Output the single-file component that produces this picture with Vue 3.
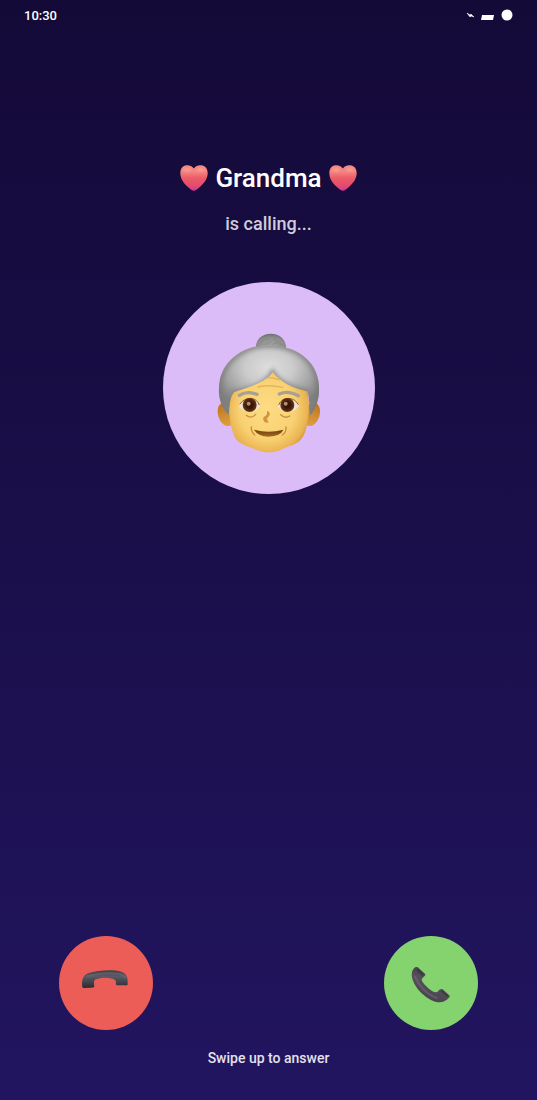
<script setup>
const time = '10:30'
const caller = 'Grandma'
</script>

<template>
  <main class="screen">
    <header class="status">
      <time>{{ time }}</time>
      <svg class="indicators" viewBox="0 0 48 16" aria-hidden="true">
        <path d="M2 5 L5 7 L6 6 L9 9 L6 8 L5 9 Z" fill="#fff" stroke="#fff" stroke-width=".5" />
        <path d="M17 7 H29 L28 12 H16 Z" fill="#fff" />
        <circle cx="42" cy="7" r="5.5" fill="#fff" />
      </svg>
    </header>

    <section class="caller">
      <h1>
        <svg v-for="side in ['left', 'right']" :key="side" :class="['heart', side]" viewBox="0 0 87 83" aria-hidden="true">
          <defs>
            <linearGradient :id="'heart-' + side" x1="0" y1="0" x2="0" y2="1">
              <stop offset="0" stop-color="#f28a80" />
              <stop offset=".25" stop-color="#f58480" />
              <stop offset=".5" stop-color="#ec5c68" />
              <stop offset=".78" stop-color="#e54c6c" />
              <stop offset="1" stop-color="#d2359a" />
            </linearGradient>
            <radialGradient :id="'shine-' + side">
              <stop offset="0" stop-color="#ffc2b1" stop-opacity=".45" />
              <stop offset="1" stop-color="#ff9b8e" stop-opacity="0" />
            </radialGradient>
          </defs>
          <path :fill="`url(#heart-${side})`" d="M43 12 C37 4 28 1 20 2 C8 3 1 13 1 27 C1 50 20 67 36 79 Q43 84 50 79 C67 67 86 49 86 27 C86 12 78 3 66 2 C57 1 49 4 43 12 Z" />
          <ellipse cx="22" cy="16" rx="19" ry="12" :fill="`url(#shine-${side})`" />
          <ellipse cx="65" cy="16" rx="19" ry="12" :fill="`url(#shine-${side})`" />
        </svg>
        <span class="name">{{ caller }}</span>
      </h1>
      <p class="state">is calling...</p>
      <svg class="avatar" viewBox="38 34 636 636" role="img" aria-label="Older woman">
        <defs>
          <radialGradient id="skin" cx=".48" cy=".5" r=".6">
            <stop offset="0" stop-color="#fddc84" />
            <stop offset=".58" stop-color="#f9d173" />
            <stop offset=".84" stop-color="#e9b451" />
            <stop offset="1" stop-color="#bd7a21" />
          </radialGradient>
          <radialGradient id="hair" cx=".5" cy=".32" r=".6">
            <stop offset="0" stop-color="#dedede" />
            <stop offset=".4" stop-color="#cbcbcb" />
            <stop offset=".75" stop-color="#a2a2a2" />
            <stop offset="1" stop-color="#808080" />
          </radialGradient>
          <radialGradient id="bun" cx=".5" cy=".65" r=".6">
            <stop offset="0" stop-color="#a0a0a0" />
            <stop offset=".7" stop-color="#8e8e8e" />
            <stop offset="1" stop-color="#747474" />
          </radialGradient>
          <radialGradient id="iris" cx=".5" cy=".5" r=".5">
            <stop offset="0" stop-color="#2b0e04" />
            <stop offset=".5" stop-color="#3c1807" />
            <stop offset="1" stop-color="#6c3710" />
          </radialGradient>
          <linearGradient id="ear" x1="0" y1="0" x2="0" y2="1">
            <stop offset="0" stop-color="#bd751c" />
            <stop offset="1" stop-color="#dea043" />
          </linearGradient>
          <linearGradient id="mouth" x1="0" y1="0" x2="0" y2="1">
            <stop offset="0" stop-color="#693e0c" />
            <stop offset="1" stop-color="#a66b21" />
          </linearGradient>
          <filter id="soft" x="-20%" y="-20%" width="140%" height="140%">
            <feGaussianBlur stdDeviation="6" />
          </filter>
          <filter id="fine" x="-20%" y="-20%" width="140%" height="140%">
            <feGaussianBlur stdDeviation="2" />
          </filter>
          <clipPath id="hairline">
            <path d="M233 431 C206 403 202 363 208 331 C218 273 273 224 352 224 C438 224 494 269 504 329 C511 371 502 407 480 434 C477 408 478 382 471 362 C430 354 386 332 367 304 C350 333 304 346 252 364 C237 379 239 407 235 433 Z" />
          </clipPath>
        </defs>
        <circle cx="356" cy="352" r="318" fill="#dbbcf9" />
        <path d="M317 230 C316 205 336 189 361 189 C388 189 408 207 407 233 Q361 248 317 230" fill="url(#bun)" />
        <g fill="none" stroke="#777" stroke-width="2" opacity=".65" filter="url(#fine)">
          <path d="M331 216 Q340 202 355 207 M348 228 Q350 213 363 214 M363 224 Q382 209 394 222 M369 204 L383 213" />
        </g>
        <ellipse cx="227" cy="431" rx="24" ry="36" transform="rotate(-18 227 431)" fill="url(#ear)" />
        <ellipse cx="484" cy="431" rx="24" ry="36" transform="rotate(18 484 431)" fill="url(#ear)" />
        <path d="M242 350 C230 407 237 450 248 486 C257 517 284 524 307 533 C326 541 337 545 355 545 C376 545 390 539 408 530 C437 521 454 512 464 485 C477 447 480 397 469 346 L366 284 Z" fill="url(#skin)" />
        <g filter="url(#fine)" fill="none" stroke-linecap="round">
          <path d="M329 324 Q355 317 386 327 M323 349 Q356 341 397 350" stroke="#d7a650" stroke-width="4" opacity=".7" />
          <path d="M267 374 Q290 359 320 371 M387 370 Q413 358 444 375" stroke="#a8a291" stroke-width="10" />
          <path d="M288 434 Q302 446 316 431 M391 432 Q405 445 418 436" stroke="#c88f3f" stroke-width="4" />
          <path d="M303 469 Q302 484 313 493 M407 469 Q409 484 396 493" stroke="#c68c39" stroke-width="4" />
        </g>
        <g filter="url(#fine)">
          <path d="M265 405 Q278 383 300 383 Q324 385 329 407 Q321 424 297 424 Q276 422 265 405" fill="#eee2d2" />
          <path d="M382 407 Q391 384 414 383 Q436 385 446 407 Q433 424 412 424 Q389 422 382 407" fill="#eee2d2" />
          <path d="M268 401 Q282 382 302 383 Q320 385 327 403 M385 403 Q394 382 415 383 Q434 384 444 402" fill="none" stroke="#8b6330" stroke-width="3" />
          <circle cx="298" cy="403" r="21" fill="url(#iris)" />
          <circle cx="411" cy="403" r="21" fill="url(#iris)" />
          <circle cx="295" cy="399" r="6" fill="#b18c78" />
          <circle cx="406" cy="399" r="6" fill="#b18c78" />
          <path d="M350 420 C364 426 358 435 351 442 Q348 447 356 455 Q342 459 339 447 Q336 439 346 436 Q352 430 350 420" fill="#d2943d" />
          <path d="M311 477 Q355 489 399 477 Q391 496 355 498 Q323 497 311 477" fill="url(#mouth)" />
        </g>
        <path d="M233 431 C206 403 202 363 208 331 C218 273 273 224 352 224 C438 224 494 269 504 329 C511 371 502 407 480 434 C477 408 478 382 471 362 C430 354 386 332 367 304 C350 333 304 346 252 364 C237 379 239 407 235 433 Z" fill="url(#hair)" />
        <g clip-path="url(#hairline)">
          <path d="M212 434 Q203 360 212 325 C224 272 280 223 352 223 C438 223 490 270 501 329 Q507 379 492 432 M244 368 Q343 352 367 304 Q389 346 474 365" fill="none" stroke="#777" stroke-width="13" opacity=".75" filter="url(#soft)" />
        </g>
      </svg>
    </section>

    <footer class="answer">
      <div class="actions">
        <button class="call decline" type="button" aria-label="Decline call">
          <svg viewBox="27 33 282 282" aria-hidden="true">
            <defs>
              <linearGradient id="handset-down" x1="0" y1="0" x2="0" y2="1">
                <stop offset="0" stop-color="#403e47" />
                <stop offset=".35" stop-color="#5b5963" />
                <stop offset="1" stop-color="#2b2930" />
              </linearGradient>
            </defs>
            <path d="M97 187 C94 165 99 151 114 145 C144 135 188 132 214 140 C230 145 234 157 233 179 Q231 182 224 181 L201 181 Q196 180 198 171 Q198 165 190 162 C171 156 151 158 137 163 Q130 167 132 175 L133 185 Q131 188 123 188 L101 189 Z" fill="url(#handset-down)" />
            <path d="M113 153 Q157 141 205 146 Q219 148 226 157" fill="none" stroke="#73717d" stroke-width="6" stroke-linecap="round" opacity=".45" />
          </svg>
        </button>
        <button class="call accept" type="button" aria-label="Answer call">
          <svg viewBox="27 33 282 282" aria-hidden="true">
            <defs>
              <linearGradient id="handset-up" x1=".8" y1="0" x2=".3" y2="1">
                <stop offset="0" stop-color="#37343b" />
                <stop offset=".5" stop-color="#55505b" />
                <stop offset="1" stop-color="#434049" />
              </linearGradient>
            </defs>
            <path d="M125 126 Q130 126 134 132 L150 146 Q153 150 149 153 Q142 158 140 164 C140 172 167 199 181 202 Q187 203 193 194 Q198 190 203 193 L222 210 Q227 214 223 217 C212 231 200 233 184 231 C157 225 118 192 111 157 Q108 140 117 130 Q121 125 125 126 Z" fill="url(#handset-up)" />
            <path d="M120 155 C130 181 155 208 185 219" fill="none" stroke="#77717d" stroke-width="7" stroke-linecap="round" opacity=".45" />
            <path d="M128 135 L143 149 M201 199 L216 212" fill="none" stroke="#2d2a31" stroke-width="6" stroke-linecap="round" opacity=".55" />
          </svg>
        </button>
      </div>
      <p class="hint">Swipe up to answer</p>
    </footer>
  </main>
</template>

<style>
body {
  margin: 0;
  background: #221560;
}
</style>

<style scoped>
.screen {
  box-sizing: border-box;
  min-height: 100vh;
  display: flex;
  flex-direction: column;
  background: linear-gradient(#140a38, #180d44 35%, #221560);
  color: #fff;
  font-family: Roboto, "Noto Sans", sans-serif;
}

.status {
  display: flex;
  justify-content: space-between;
  align-items: center;
  padding: 8px 24px 0;
  font-size: 13px;
  line-height: 16px;
  font-weight: 500;
}

.indicators {
  width: 48px;
  height: 16px;
}

.caller {
  display: flex;
  flex-direction: column;
  align-items: center;
  padding-top: 138px;
}

h1 {
  display: flex;
  align-items: center;
  gap: 7px;
  margin: 0;
  font-size: 26px;
  line-height: 32px;
  font-weight: 500;
}

.heart {
  width: 28px;
  height: 28px;
}

.name {
  order: 1;
}

.right {
  order: 2;
}

.state {
  margin: 18px 0 0;
  font-size: 18px;
  line-height: 24px;
  font-weight: 500;
  color: #d0cbdd;
}

.avatar {
  width: 212px;
  height: 212px;
  margin-top: 46px;
}

.answer {
  margin-top: auto;
  padding: 48px 11% 32px;
}

.actions {
  display: flex;
  justify-content: space-between;
}

.call {
  width: 94px;
  height: 94px;
  padding: 0;
  border: 0;
  border-radius: 50%;
  cursor: pointer;
}

.call svg {
  display: block;
  width: 100%;
}

.decline {
  background: #ed5d57;
}

.accept {
  background: #85d36e;
}

.hint {
  margin: 18px 0 0;
  text-align: center;
  font-size: 14px;
  line-height: 20px;
  font-weight: 500;
  color: #e4e1ed;
}
</style>
